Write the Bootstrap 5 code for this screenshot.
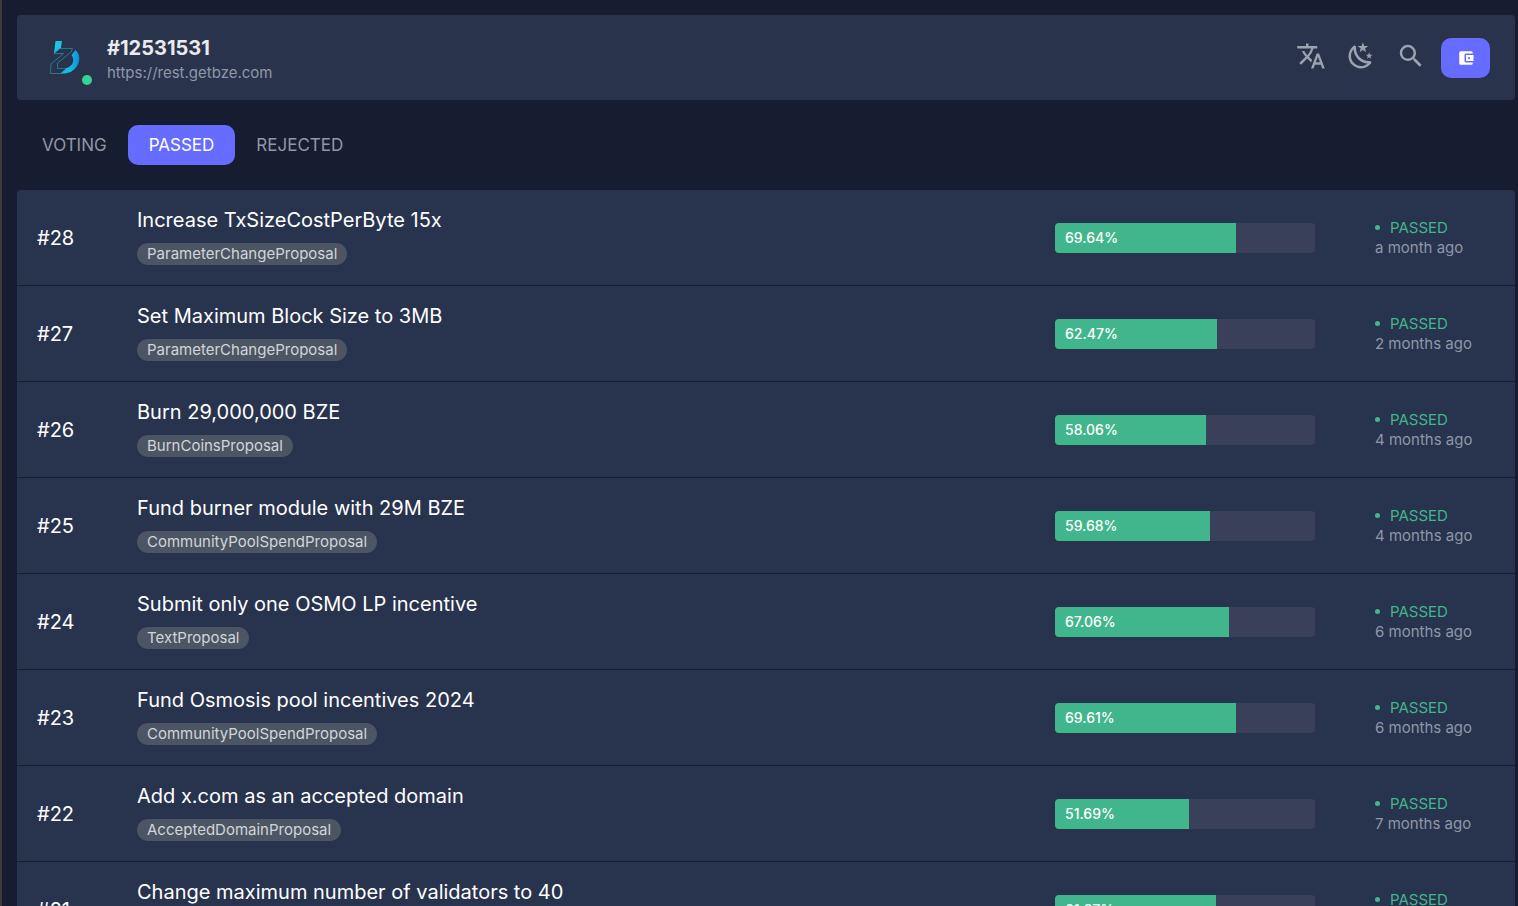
<!DOCTYPE html>
<html lang="en" data-bs-theme="dark">
<head>
<meta charset="utf-8">
<meta name="viewport" content="width=device-width, initial-scale=1">
<title>BZE governance proposals</title>
<link rel="stylesheet" href="https://cdn.jsdelivr.net/npm/bootstrap@5.3.0/dist/css/bootstrap.min.css">
<style>
  body { background: #171d30; font-family: Inter, "Liberation Sans", sans-serif; font-size: 15px; line-height: 20px; }
  .page-shell { height: 100vh; padding: 15px 3px 0 15px; border-left: 2px solid #3c3c3e; }
  .topbar { background: #2a334c; border-radius: 4px; padding: 20px 25px 15px 30px; }
  .chain-logo { width: 45px; height: 50px; margin-right: 15px; }
  .status-dot { width: 10px; height: 10px; background: #36d399; }
  .block-height { font-size: 20px; line-height: 26px; font-weight: 700; color: #e8eaee; }
  .endpoint { line-height: 24px; color: #8f98a6; }
  .tool-group { gap: 20px; margin-right: 15px; }
  .tool-btn { color: #9ca3af; }
  .wallet-btn, .wallet-btn:hover { background: #666cff; color: #fff; border-radius: 10px; padding: 11px 15px 11px 16px; }
  .tab-strip { padding: 25px 4px; }
  .tab-strip .nav-link { padding: 10px 21px; font-size: 17px; line-height: 20px; color: #8f98a6; border-radius: 10px; }
  .tab-strip .nav-link.active { background: #666cff; color: #fff; }
  .proposals { table-layout: fixed; background: #28334e; border-radius: 4px; }
  .proposals td { padding: 16px 20px 20px; border-bottom: 1px solid #171d2c; }
  .proposals td.centered { padding-top: 0; padding-bottom: 0; vertical-align: middle; }
  .col-id { width: 100px; }
  .col-tally { width: 300px; }
  .col-state { width: 180px; }
  .proposal-id, .proposal-title { font-size: 20px; line-height: 28px; color: #fff; }
  .proposal-title { display: block; margin-bottom: 9px; }
  .proposal-type { display: block; width: fit-content; background: #4b5563; color: #d1d5db; line-height: 22px; padding: 0 10px; border-radius: 11px; }
  .tally { height: 30px; background: #3a4059; border-radius: 4px; font-size: 14px; }
  .tally .progress-bar { background: #41b68c; color: #fff; font-weight: 500; text-align: left; padding-left: 10px; }
  .proposals td.state-cell { padding-left: 40px; color: #8f98a6; }
  .state-name { color: #41b68c; gap: 10px; }
  .state-mark { width: 5px; height: 5px; background: #41b68c; }
</style>
</head>
<body>
<div class="page-shell overflow-hidden">
  <header class="topbar d-flex align-items-center">
    <div class="chain-logo position-relative">
      <svg width="45" height="50" viewBox="0 0 45 50" aria-hidden="true">
        <defs><linearGradient id="bowl" x1="0" y1="0" x2="1" y2="0"><stop offset="0" stop-color="#19c7e6"/><stop offset=".6" stop-color="#14b4e2"/><stop offset="1" stop-color="#0a8fdc"/></linearGradient></defs>
        <path fill="#1cc3e2" d="M8.500 6H15l-1 7-7 5.500z"/>
        <path fill="url(#bowl)" d="M28.500 15C33.500 19 33.500 27.500 29 32.500 25 37.500 20 38.800 13.500 38.500L19.500 33C25.500 31.500 28.500 25.500 24.500 20z"/>
        <path fill="none" stroke="#2593ad" stroke-width=".7" d="M7 18.500L12 13.500H25.500L24 17 10.500 28V33.500H19.500L15 38.500H3.500L4 29 16.500 18.500z"/>
      </svg>
      <span class="status-dot rounded-circle position-absolute bottom-0 end-0"></span>
    </div>
    <div class="flex-grow-1">
      <div class="block-height">#12531531</div>
      <div class="endpoint">https://rest.getbze.com</div>
    </div>
    <div class="d-flex align-items-center pb-1">
      <div class="tool-group d-flex pb-1">
        <button class="tool-btn btn p-0 border-0 d-flex" type="button" aria-label="Language">
          <svg width="30" height="30" viewBox="0 0 24 24" fill="currentColor"><path d="M12.870 15.070 10.330 12.560l.03-.03A17.520 17.520 0 0 0 14.070 6H17V4h-7V2H8v2H1v2h11.170C11.500 7.920 10.440 9.750 9 11.350 8.070 10.320 7.300 9.190 6.690 8h-2c.73 1.630 1.730 3.170 2.980 4.560l-5.090 5.020L4 19l5-5 3.110 3.110.76-2.040M18.500 10h-2L12 22h2l1.120-3h4.750L21 22h2l-4.500-12m-2.620 7 1.620-4.330L19.120 17h-3.240z"/></svg>
        </button>
        <button class="tool-btn btn p-0 border-0 d-flex" type="button" aria-label="Theme">
          <svg width="30" height="30" viewBox="0 0 24 24" fill="currentColor"><path d="M17.750 4.090 15.220 6.030l.91 3.060L13.500 7.280l-2.630 1.810.91-3.060-2.530-1.940L12.440 4 13.500 1l1.060 3 3.190.09M21.250 11l-1.640 1.250.59 1.980-1.700-1.170-1.700 1.170.59-1.980L15.750 11l2.060-.05L18.500 9l.69 1.950 2.060.05M18.970 15.950c.83-.08 1.720 1.100 1.190 1.850-.32.45-.66.87-1.080 1.270-3.910 3.930-10.240 3.930-14.140 0-3.910-3.900-3.910-10.240 0-14.140.4-.4.82-.76 1.270-1.080.75-.53 1.930.36 1.850 1.190-.27 2.860.69 5.830 2.890 8.020 2.190 2.200 5.150 3.160 8.020 2.890m-1.640 2.020c-2.830-.16-5.630-1.330-7.800-3.470-2.170-2.190-3.330-5-3.490-7.820-2.810 3.140-2.700 7.960.31 10.980 3.020 3.010 7.840 3.120 10.980.31z"/></svg>
        </button>
        <button class="tool-btn btn p-0 border-0 d-flex" type="button" aria-label="Search">
          <svg width="30" height="30" viewBox="0 0 24 24" fill="currentColor"><path d="M9.500 3A6.500 6.500 0 0 1 16 9.500c0 1.610-.59 3.090-1.560 4.230l.27.27h.79l5 5-1.500 1.500-5-5v-.79l-.27-.27A6.516 6.516 0 0 1 9.500 16a6.500 6.500 0 0 1 0-13m0 2C7 5 5 7 5 9.500S7 14 9.500 14 14 12 14 9.500 12 5 9.500 5z"/></svg>
        </button>
      </div>
      <button class="wallet-btn btn border-0 d-flex" type="button" aria-label="Wallet">
        <svg width="18" height="18" viewBox="0 0 24 24" fill="currentColor"><path d="M21 18v1a2 2 0 0 1-2 2H5a2 2 0 0 1-2-2V5a2 2 0 0 1 2-2h14a2 2 0 0 1 2 2v1h-9a2 2 0 0 0-2 2v8a2 2 0 0 0 2 2m0-2h10V8H12m4 5.500a1.500 1.500 0 1 1 0-3 1.500 1.500 0 0 1 0 3z"/></svg>
      </button>
    </div>
  </header>

  <nav class="tab-strip nav" aria-label="Proposal status">
    <a class="nav-link" href="#voting">VOTING</a>
    <a class="nav-link active" href="#passed" aria-current="page">PASSED</a>
    <a class="nav-link" href="#rejected">REJECTED</a>
  </nav>

  <table class="proposals w-100">
    <colgroup><col class="col-id"><col><col class="col-tally"><col class="col-state"></colgroup>
    <tbody id="proposal-rows"></tbody>
  </table>
</div>
<script src="https://cdn.jsdelivr.net/npm/bootstrap@5.3.0/dist/js/bootstrap.bundle.min.js"></script>
<script>
  const proposals = [
    [28, 'Increase TxSizeCostPerByte 15x', 'ParameterChangeProposal', '69.64%', 'a month ago'],
    [27, 'Set Maximum Block Size to 3MB', 'ParameterChangeProposal', '62.47%', '2 months ago'],
    [26, 'Burn 29,000,000 BZE', 'BurnCoinsProposal', '58.06%', '4 months ago'],
    [25, 'Fund burner module with 29M BZE', 'CommunityPoolSpendProposal', '59.68%', '4 months ago'],
    [24, 'Submit only one OSMO LP incentive', 'TextProposal', '67.06%', '6 months ago'],
    [23, 'Fund Osmosis pool incentives 2024', 'CommunityPoolSpendProposal', '69.61%', '6 months ago'],
    [22, 'Add x.com as an accepted domain', 'AcceptedDomainProposal', '51.69%', '7 months ago'],
    [21, 'Change maximum number of validators to 40', 'ParameterChangeProposal', '61.97%', '7 months ago']
  ];
  document.getElementById('proposal-rows').innerHTML = proposals.map(([id, title, type, share, age]) => `
    <tr>
      <td class="centered proposal-id">#${id}</td>
      <td><span class="proposal-title text-truncate">${title}</span><span class="proposal-type">${type}</span></td>
      <td class="centered"><div class="progress tally"><div class="progress-bar" style="width:${share}">${share}</div></div></td>
      <td class="centered state-cell"><div class="state-name d-flex align-items-center"><span class="state-mark rounded-circle"></span>PASSED</div>${age}</td>
    </tr>`).join('');
</script>
</body>
</html>
